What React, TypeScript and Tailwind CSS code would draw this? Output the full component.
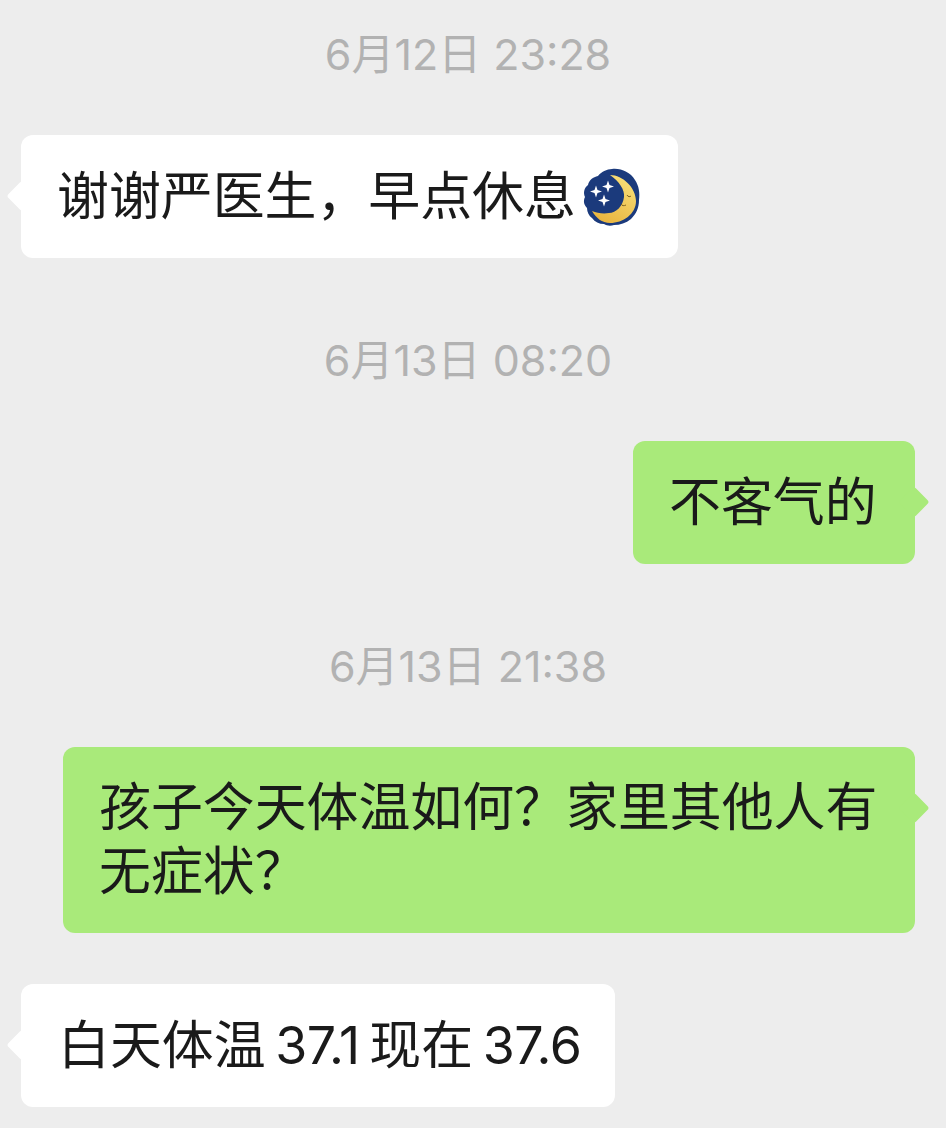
const FONT = "font-['Inter','Noto_Sans_CJK_SC',sans-serif]";

function MoonEmoji() {
  return (
    <svg viewBox="0 0 57 58" className="block h-[58px] w-[57px]">
      <defs>
        <linearGradient id="moon" x1="0.8" y1="0" x2="0.3" y2="1">
          <stop offset="0" stopColor="#f9e07a" />
          <stop offset="1" stopColor="#e9b53f" />
        </linearGradient>
      </defs>
      <path
        d="M29 1c9-1 18 3 23 11 4 6 5 13 4 20 0 8-3 14-8 19-5 4-11 6-17 6-3 1-7 1-10-1-5 0-9-2-12-6-3-2-5-6-5-10C1 37 0 33 2 29c-2-4-1-9 3-12 1-5 5-8 10-9 3-4 9-7 14-7z"
        fill="#1b3a7c"
      />
      <path
        d="M27 7C40 7 53 20 53 33 53 46 40 55 27 55 19 55 13 50 9 43 14 45 20 46 26 45 33 45 40 38 41 29 42 22 36 13 27 7z"
        fill="url(#moon)"
      />
      <path d="M44 27c1 2 3 2 4 1M38 36c1 2 3 2 5 1" fill="none" stroke="#7d6120" strokeWidth="1" />
      <path d="M13 17.500l1.500 4.500 4.500 1.500-4.500 1.500-1.500 4.500-1.500-4.500-4.500-1.500 4.500-1.500z" fill="#ffffff" />
      <path d="M25 12.500l1.500 4.500 4.500 1.500-4.500 1.500-1.500 4.500-1.500-4.500-4.500-1.500 4.500-1.500z" fill="#ffffff" />
      <path d="M21 26.500l1.500 4.500 4.500 1.500-4.500 1.500-1.500 4.500-1.500-4.500-4.500-1.500 4.500-1.500z" fill="#ffffff" />
    </svg>
  );
}

function Time({ children }: { children: string }) {
  return (
    <div className="h-[48px] text-center text-[43px] leading-[46px] text-[#b2b2b2]">
      {children}
    </div>
  );
}

function Bubble({
  mine,
  className,
  children,
}: {
  mine?: boolean;
  className?: string;
  children: React.ReactNode;
}) {
  return (
    <div
      className={
        "relative rounded-[12px] text-[51.9px] leading-[64px] text-[#1a1a1a] " +
        (mine ? "self-end bg-[#a9ea7a] " : "self-start bg-white ") +
        (className ?? "")
      }
    >
      {/* tail sits level with the first line, not the bubble's middle */}
      {mine ? (
        <div className="absolute right-[-10px] top-[50px] h-[22px] w-[22px] rotate-45 rounded-[3px] bg-[#a9ea7a]" />
      ) : (
        <div className="absolute left-[-10px] top-[50px] h-[22px] w-[22px] rotate-45 rounded-[3px] bg-white" />
      )}
      <div className="relative">{children}</div>
    </div>
  );
}

export default function App() {
  return (
    <div className={`${FONT} flex h-[1128px] w-[946px] flex-col overflow-hidden bg-[#ededed] pl-[21px] pr-[31px] pt-[31px]`}>
      <Time>6月12日 23:28</Time>
      <Bubble className="mt-[56px] w-[657px] py-[29.5px] pl-[36px]">
        <div className="flex h-[64px] items-center">
          <span>谢谢严医生，早点休息</span>
          <span className="ml-[7px]">
            <MoonEmoji />
          </span>
        </div>
      </Bubble>

      <div className="mt-[79px]">
        <Time>6月13日 08:20</Time>
      </div>
      <Bubble mine className="mt-[56px] w-[282px] py-[29.5px] pl-[36px]">
        不客气的
      </Bubble>

      <div className="mt-[79px]">
        <Time>6月13日 21:38</Time>
      </div>
      <Bubble mine className="mt-[56px] w-[852px] px-[36px] py-[29px]">
        孩子今天体温如何？家里其他人有无症状？
      </Bubble>

      <Bubble className="mt-[51px] w-[594px] py-[29.5px] pl-[37px] [word-spacing:-5px]">
        白天体温 <span className="tracking-[-0.5px]">37.1</span> 现在 <span className="tracking-[-0.5px]">37.6</span>
      </Bubble>
    </div>
  );
}
